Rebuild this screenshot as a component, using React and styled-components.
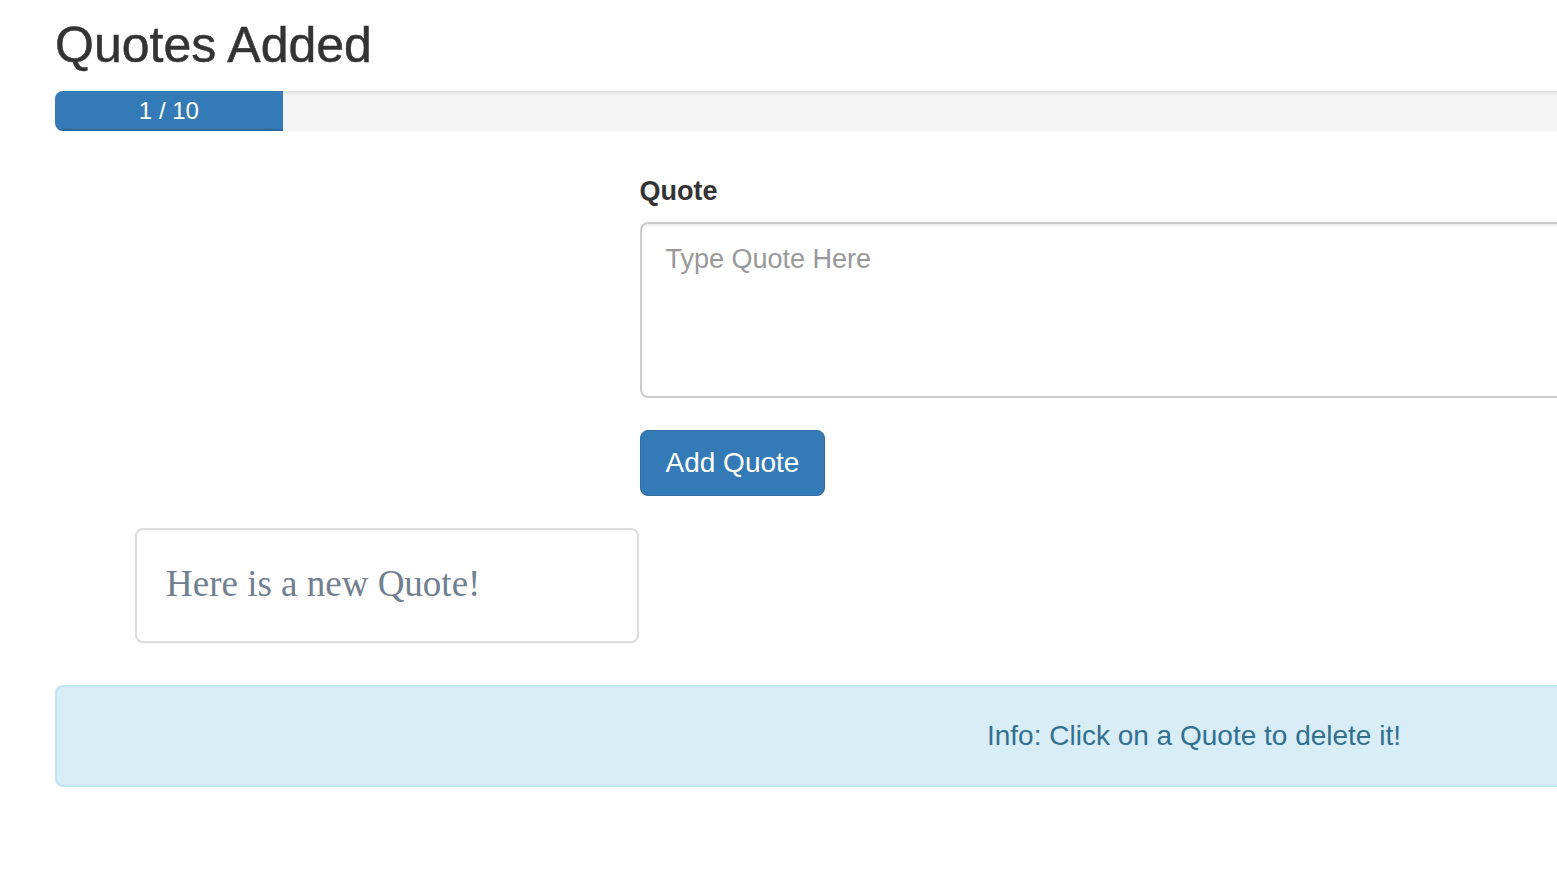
import React, { useState } from 'react'
import styled, { createGlobalStyle } from 'styled-components'

const GlobalStyle = createGlobalStyle`
  html, body {
    margin: 0;
    padding: 0;
    background: #fff;
    overflow-x: hidden;
  }
  body {
    font-family: "Liberation Sans", Arial, sans-serif;
    color: #333;
  }
`

const Container = styled.div`
  width: 2278px;
  margin-left: 55px;
`

const Title = styled.h1`
  margin: 18px 0 19px;
  font-size: 50px;
  line-height: 54px;
  font-weight: 500;
  color: #333;
  -webkit-text-stroke: 0.5px #333;
`

const Progress = styled.div`
  height: 40px;
  margin-bottom: 40px;
  background: #f5f5f5;
  border-radius: 8px;
  overflow: hidden;
  box-shadow: inset 0 2px 4px rgba(0, 0, 0, 0.1);
`

const ProgressBar = styled.div`
  height: 100%;
  background: #337ab7;
  color: #fff;
  font-size: 24px;
  line-height: 40px;
  text-align: center;
  box-shadow: inset 0 -2px 0 rgba(0, 0, 0, 0.15);
`

const FormRow = styled.div`
  display: grid;
  grid-template-columns: 3fr 6fr 3fr;
  column-gap: 30px;
`

const FormColumn = styled.form`
  grid-column: 2;
`

const Label = styled.label`
  display: block;
  margin-bottom: 11px;
  font-size: 27px;
  line-height: 40px;
  font-weight: bold;
  color: #333;
`

const TextArea = styled.textarea`
  display: block;
  box-sizing: border-box;
  width: 100%;
  height: 176px;
  margin: 0 0 32px;
  padding: 15px 24px 12px;
  border: 2px solid #ccc;
  border-radius: 8px;
  box-shadow: inset 0 2px 2px rgba(0, 0, 0, 0.075);
  font-family: "Liberation Sans", Arial, sans-serif;
  font-size: 27px;
  line-height: 40px;
  color: #555;
  resize: none;
  outline: none;

  &::placeholder {
    color: #999;
  }
`

const Button = styled.button`
  display: inline-block;
  padding: 12px 25px;
  border: 1px solid #2e6da4;
  border-radius: 8px;
  background: #337ab7;
  color: #fff;
  font-family: "Liberation Sans", Arial, sans-serif;
  font-size: 28px;
  line-height: 40px;
  cursor: pointer;
`

const QuoteGrid = styled.div`
  display: grid;
  grid-template-columns: repeat(auto-fill, 504px);
  gap: 30px;
  margin-top: 32px;
  padding-left: 80px;
`

const QuoteCard = styled.div`
  box-sizing: border-box;
  height: 115px;
  padding: 28px 29px 30px;
  border: 2px solid #ddd;
  border-radius: 8px;
  background: #fff;
  box-shadow: 0 1px 2px rgba(0, 0, 0, 0.05);
  font-family: "Liberation Serif", "Times New Roman", serif;
  font-size: 37px;
  line-height: 51px;
  color: #708090;
  cursor: pointer;
`

const Alert = styled.div`
  box-sizing: border-box;
  margin-top: 42px;
  padding: 29px 30px;
  border: 2px solid #bce8f1;
  border-radius: 8px;
  background: #d9edf7;
  color: #31708f;
  font-size: 28px;
  line-height: 40px;
  text-align: center;
`

const MAX_QUOTES = 10

export default function App() {
  const [quotes, setQuotes] = useState(['Here is a new Quote!'])
  const [text, setText] = useState('')

  const addQuote = (event) => {
    event.preventDefault()
    if (!text.trim() || quotes.length >= MAX_QUOTES) return
    setQuotes([...quotes, text])
    setText('')
  }

  const deleteQuote = (index) => {
    setQuotes(quotes.filter((_, i) => i !== index))
  }

  return (
    <Container>
      <GlobalStyle />
      <Title>Quotes Added</Title>
      <Progress>
        <ProgressBar style={{ width: `${(quotes.length / MAX_QUOTES) * 100}%` }}>
          {quotes.length} / {MAX_QUOTES}
        </ProgressBar>
      </Progress>
      <FormRow>
        <FormColumn onSubmit={addQuote}>
          <Label htmlFor="quote">Quote</Label>
          <TextArea
            id="quote"
            placeholder="Type Quote Here"
            value={text}
            onChange={(e) => setText(e.target.value)}
          />
          <Button type="submit">Add Quote</Button>
        </FormColumn>
      </FormRow>
      <QuoteGrid>
        {quotes.map((quote, i) => (
          <QuoteCard key={i} onClick={() => deleteQuote(i)}>
            {quote}
          </QuoteCard>
        ))}
      </QuoteGrid>
      <Alert>Info: Click on a Quote to delete it!</Alert>
    </Container>
  )
}
